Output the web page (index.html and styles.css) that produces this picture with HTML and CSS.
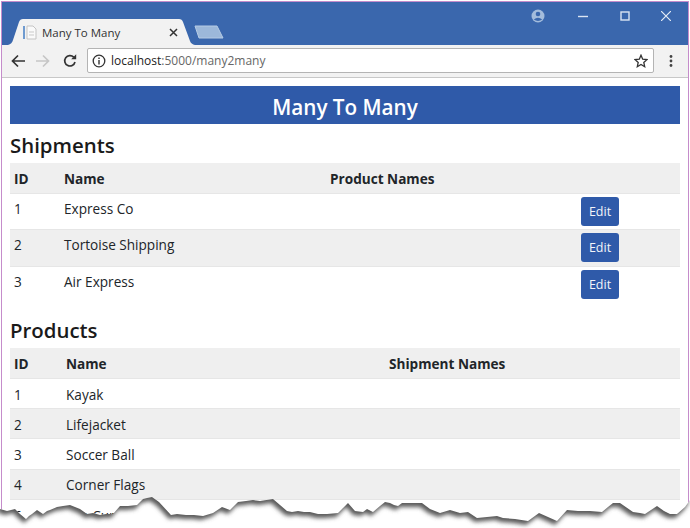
FILE: index.html
```html
<!DOCTYPE html>
<html lang="en">

<head>
    <meta charset="UTF-8">
    <link rel="stylesheet" href="styles.css">
    <title>Many To Many</title>
</head>

<body>
    <div class="window">
        <div class="titlebar">
            <div class="tab">
                <svg class="tab-shape" width="187" height="26" viewBox="0 0 187 26">
                    <path d="M0 26 Q4 25 5 21 L11 3 Q12 0 15 0 L171 0 Q174 0 175 3 L182 22 Q183 25 187 26 Z" fill="#f2f2f2" />
                </svg>
                <svg class="favicon" width="14" height="15" viewBox="0 0 14 15">
                    <rect x="0" y="1" width="2" height="13" fill="#6f9bd0" />
                    <path d="M4 1 H10 L13 4 V14 H4 Z" fill="#fafafa" stroke="#c4c4c4" />
                    <path d="M6 7 H11 M6 10 H11" stroke="#c9c9c9" />
                </svg>
                <span class="tab-title">Many To Many</span>
                <svg class="tab-close" width="9" height="9" viewBox="0 0 9 9">
                    <path d="M1 1 L8 8 M8 1 L1 8" stroke="#333" stroke-width="1.5" fill="none" />
                </svg>
            </div>
            <svg class="new-tab" width="30" height="14" viewBox="0 0 30 14">
                <path d="M1 1 H23 L29 13 H5 Z" fill="#9cb8da" stroke="#b5cbe4" />
            </svg>
            <div class="window-controls">
                <svg class="profile" width="14" height="14" viewBox="0 0 14 14">
                    <circle cx="7" cy="7" r="6.5" fill="#a3bcdc" />
                    <circle cx="7" cy="5" r="2.3" fill="#3a67ad" />
                    <path d="M2.8 10.6 Q7 7 11.2 10.6 Q7 13.5 2.8 10.6 Z" fill="#3a67ad" />
                </svg>
                <svg class="win-btn" width="10" height="10" viewBox="0 0 10 10">
                    <path d="M0 5.5 H10" stroke="#dbe5f2" stroke-width="1.4" />
                </svg>
                <svg class="win-btn" width="10" height="10" viewBox="0 0 10 10">
                    <rect x="1" y="1" width="8" height="8" fill="none" stroke="#dbe5f2" stroke-width="1.4" />
                </svg>
                <svg class="win-btn" width="10" height="10" viewBox="0 0 10 10">
                    <path d="M0 0 L10 10 M10 0 L0 10" stroke="#e6edf6" stroke-width="1.2" />
                </svg>
            </div>
        </div>

        <div class="toolbar">
            <svg class="nav-icon" width="14" height="14" viewBox="0 0 14 14">
                <path d="M14 7 H2 M7 1.5 L1.5 7 L7 12.5" stroke="#333" stroke-width="1.7" fill="none" />
            </svg>
            <svg class="nav-icon" width="14" height="14" viewBox="0 0 14 14">
                <path d="M0 7 H12 M7 1.5 L12.5 7 L7 12.5" stroke="#c6c6c6" stroke-width="1.7" fill="none" />
            </svg>
            <svg class="nav-icon" width="14" height="14" viewBox="0 0 14 14">
                <path d="M12 8 A5.2 5.2 0 1 1 10.7 3.2" stroke="#333" stroke-width="1.7" fill="none" />
                <path d="M8.2 5.2 H13.2 V0.2 Z" fill="#333" />
            </svg>
            <div class="address">
                <svg class="info-icon" width="14" height="14" viewBox="0 0 14 14">
                    <circle cx="7" cy="7" r="5.8" fill="none" stroke="#333" stroke-width="1.3" />
                    <path d="M7 6 V10.4 M7 3.6 V5" stroke="#333" stroke-width="1.4" />
                </svg>
                <span class="host">localhost</span><span class="path">:5000/many2many</span>
                <svg class="star" width="14" height="14" viewBox="0 0 14 14">
                    <path d="M7 1.2 L8.7 5.2 L13 5.6 L9.8 8.4 L10.7 12.7 L7 10.5 L3.3 12.7 L4.2 8.4 L1 5.6 L5.3 5.2 Z" fill="none" stroke="#333" stroke-width="1.3" />
                </svg>
            </div>
            <svg class="kebab" width="4" height="14" viewBox="0 0 4 14">
                <circle cx="2" cy="2.5" r="1.4" fill="#444" />
                <circle cx="2" cy="7" r="1.4" fill="#444" />
                <circle cx="2" cy="11.5" r="1.4" fill="#444" />
            </svg>
        </div>

        <div class="page">
            <h4 class="banner">Many To Many</h4>

            <h5 class="section-title">Shipments</h5>
            <table class="data shipments">
                <thead>
                    <tr>
                        <th class="col-id">ID</th>
                        <th class="col-name">Name</th>
                        <th class="col-other">Product Names</th>
                        <th></th>
                    </tr>
                </thead>
                <tbody>
                    <tr>
                        <td>1</td>
                        <td>Express Co</td>
                        <td></td>
                        <td><button class="edit">Edit</button></td>
                    </tr>
                    <tr>
                        <td>2</td>
                        <td>Tortoise Shipping</td>
                        <td></td>
                        <td><button class="edit">Edit</button></td>
                    </tr>
                    <tr>
                        <td>3</td>
                        <td>Air Express</td>
                        <td></td>
                        <td><button class="edit">Edit</button></td>
                    </tr>
                </tbody>
            </table>

            <h5 class="section-title products-title">Products</h5>
            <table class="data products">
                <thead>
                    <tr>
                        <th class="col-id">ID</th>
                        <th class="col-name">Name</th>
                        <th class="col-other">Shipment Names</th>
                    </tr>
                </thead>
                <tbody>
                    <tr>
                        <td>1</td>
                        <td>Kayak</td>
                        <td></td>
                    </tr>
                    <tr>
                        <td>2</td>
                        <td>Lifejacket</td>
                        <td></td>
                    </tr>
                    <tr>
                        <td>3</td>
                        <td>Soccer Ball</td>
                        <td></td>
                    </tr>
                    <tr>
                        <td>4</td>
                        <td>Corner Flags</td>
                        <td></td>
                    </tr>
                    <tr>
                        <td>5</td>
                        <td>Tea Cup</td>
                        <td></td>
                    </tr>
                </tbody>
            </table>
        </div>
    </div>

    <!-- torn paper edge over the bottom of the shot -->
    <svg class="torn" width="690" height="48" viewBox="0 480 690 48">
        <defs>
            <path id="below" d="M0 509 L7 511 L11 510 L15 509 L20 514 L26 519 L29 516 L32 514 L37 510 L40 512 L43 514 L47 511 L50 510 L57 507 L63 506 L70 505 L75 507 L80 509 L87 514 L93 513 L100 515 L106 514 L113 514 L120 506 L128 506 L137 505 L143 499 L147 498 L152 497 L159 502 L171 515 L177 514 L186 515 L194 515 L203 516 L213 513 L222 507 L230 510 L238 502 L246 501 L253 500 L260 501 L273 499 L280 505 L287 511 L292 512 L298 511 L304 512 L310 512 L318 514 L327 514 L338 513 L343 508 L348 503 L355 511 L363 512 L367 509 L373 512 L380 506 L385 502 L390 503 L394 505 L398 506 L402 503 L412 503 L422 503 L430 509 L440 513 L450 510 L460 513 L468 512 L477 518 L487 517 L497 516 L503 518 L515 519 L528 521 L539 513 L548 517 L557 521 L567 510 L578 511 L590 511 L602 512 L608 507 L613 503 L620 503 L633 512 L640 513 L645 514 L651 510 L657 506 L664 511 L670 514 L677 514 L685 507 L690 500 V528 H0 Z" />
            <path id="above" d="M0 509 L7 511 L11 510 L15 509 L20 514 L26 519 L29 516 L32 514 L37 510 L40 512 L43 514 L47 511 L50 510 L57 507 L63 506 L70 505 L75 507 L80 509 L87 514 L93 513 L100 515 L106 514 L113 514 L120 506 L128 506 L137 505 L143 499 L147 498 L152 497 L159 502 L171 515 L177 514 L186 515 L194 515 L203 516 L213 513 L222 507 L230 510 L238 502 L246 501 L253 500 L260 501 L273 499 L280 505 L287 511 L292 512 L298 511 L304 512 L310 512 L318 514 L327 514 L338 513 L343 508 L348 503 L355 511 L363 512 L367 509 L373 512 L380 506 L385 502 L390 503 L394 505 L398 506 L402 503 L412 503 L422 503 L430 509 L440 513 L450 510 L460 513 L468 512 L477 518 L487 517 L497 516 L503 518 L515 519 L528 521 L539 513 L548 517 L557 521 L567 510 L578 511 L590 511 L602 512 L608 507 L613 503 L620 503 L633 512 L640 513 L645 514 L651 510 L657 506 L664 511 L670 514 L677 514 L685 507 L690 500 V470 H0 Z" />
            <clipPath id="below-clip">
                <use href="#below" />
            </clipPath>
            <filter id="soft" x="-5%" y="-20%" width="110%" height="140%">
                <feGaussianBlur stdDeviation="2" />
            </filter>
        </defs>
        <use href="#below" fill="#fff" />
        <g clip-path="url(#below-clip)">
            <use href="#above" fill="#5a5a5a" filter="url(#soft)" transform="translate(-2 4)" />
        </g>
    </svg>
</body>

</html>
```

FILE: styles.css
```css
body {
    margin: 0;
    background: #fff;
    font-family: "Open Sans", "Noto Sans", sans-serif;
    color: #212529;
}

.window {
    height: 527px;
    margin: 1px 1px 0 1px;
    border: 1px solid #c58ccb;
    border-bottom: 0;
    overflow: hidden;
    box-sizing: border-box;
}

/* browser chrome */
.titlebar {
    display: flex;
    align-items: flex-end;
    height: 43px;
    padding-left: 6px;
    background: #3a67ad;
}

.tab {
    position: relative;
    display: flex;
    align-items: center;
    width: 187px;
    height: 26px;
    flex: none;
}

.tab-shape {
    position: absolute;
    left: 0;
    top: 0;
}

.favicon {
    position: relative;
    margin-left: 15px;
}

.tab-title {
    position: relative;
    margin-left: 5px;
    font-size: 11.5px;
    color: #333;
    white-space: nowrap;
    width: 127px;
}

.tab-close {
    position: relative;
}

.new-tab {
    flex: none;
    margin: 0 0 6px -1px;
}

.window-controls {
    display: flex;
    align-items: center;
    align-self: flex-start;
    margin-left: auto;
    height: 28px;
    padding-right: 17px;
}

.win-btn {
    margin-left: 31.5px;
}

.profile {
    margin-right: 2px;
}

.toolbar {
    display: flex;
    align-items: center;
    height: 33px;
    padding: 0 0 1px 9px;
    background: #f2f2f2;
    border-bottom: 1px solid #c8c8c8;
    box-sizing: border-box;
}

.nav-icon {
    margin-right: 11px;
    flex: none;
}

.nav-icon:nth-child(2) {
    margin-right: 13px;
}

.address {
    display: flex;
    align-items: center;
    width: 567px;
    height: 25px;
    margin-left: -1px;
    padding: 0 5px 0 4px;
    background: #fff;
    border: 1px solid #b4b4b4;
    border-radius: 2px;
    box-sizing: border-box;
    font-size: 12px;
}

.info-icon {
    margin-right: 5px;
}

.host {
    color: #222;
}

.path {
    color: #666;
}

.star {
    margin-left: auto;
}

.kebab {
    margin-left: 15px;
}

/* page content */
.page {
    padding: 8px 8px 0 8px;
    background: #fff;
}

.banner {
    margin: 0;
    height: 38px;
    line-height: 43px;
    background: #2f5aa9;
    color: #fff;
    font-size: 20.7px;
    font-weight: 600;
    text-align: center;
}

.section-title {
    margin: 0;
    height: 39px;
    line-height: 43px;
    font-size: 20.4px;
    font-weight: 600;
    color: #1a1a1a;
}

.products-title {
    height: 45px;
    line-height: 54px;
}

.data {
    width: 100%;
    border-collapse: collapse;
    table-layout: fixed;
    font-size: 13.6px;
}

.data th {
    height: 30px;
    padding: 2px 4px 0;
    background: #efefef;
    font-weight: 700;
    text-align: left;
    box-sizing: border-box;
}

.data td {
    padding: 2px 4px 0;
    border-top: 1px solid #e6e6e6;
    box-sizing: border-box;
}

.shipments td {
    height: 36.5px;
    padding-top: 3px;
    vertical-align: top;
    line-height: 24px;
}

.shipments tbody tr:nth-child(even) td,
.products tbody tr:nth-child(even) td {
    background: #efefef;
}

.products th {
    height: 31px;
}

.products td {
    height: 30.2px;
    padding-top: 1px;
}

.shipments .col-id {
    width: 50px;
}

.shipments .col-name {
    width: 266px;
}

.shipments .col-other {
    width: 251px;
}

.products .col-id {
    width: 52px;
}

.products .col-name {
    width: 323px;
}

.edit {
    display: block;
    width: 38px;
    height: 29px;
    padding: 0;
    background: #2f5aa9;
    color: #f2f5fa;
    border: 0;
    border-radius: 3px;
    font-family: inherit;
    font-size: 12.5px;
}

.torn {
    position: absolute;
    left: 0;
    top: 480px;
    display: block;
}
```
